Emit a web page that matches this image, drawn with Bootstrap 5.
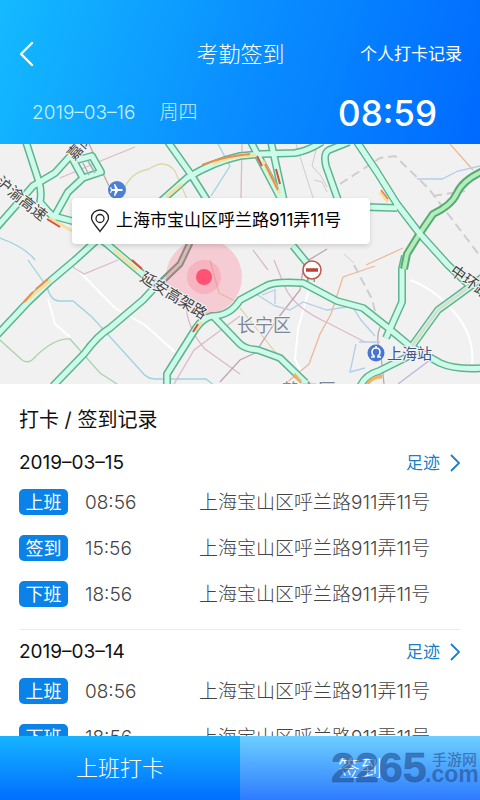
<!DOCTYPE html>
<html lang="zh-CN">
<head>
<meta charset="utf-8">
<meta name="viewport" content="width=device-width, initial-scale=1">
<title>考勤签到</title>
<link href="https://cdn.jsdelivr.net/npm/bootstrap@5.3.0/dist/css/bootstrap.min.css" rel="stylesheet">
<style>
  body { font-family: Inter, "Noto Sans CJK SC", sans-serif; color: #111; background: #fff; }
  .app-header { background: linear-gradient(108deg, #14baff 0%, #0a90ff 48%, #006aff 100%); padding: 32px 18px 8px 19px; }
  .title-row { display: grid; grid-template-columns: 1fr auto 1fr; height: 44px; }
  .page-title { font-size: 22px; line-height: 30px; font-weight: 300; }
  .log-link { font-size: 17px; line-height: 24px; }
  .time-row { height: 46px; margin-top: 14px; padding: 0 25px 0 13px; }
  .today { font-size: 19px; font-weight: 300; color: #c4f0ff; gap: 24px; }
  .clock { font-size: 35px; line-height: 46px; font-weight: 500; }
  .map-canvas { display: block; width: 100%; height: 240px; }
  .place-card { top: 54px; left: 15%; width: 62%; height: 46px; padding: 0 18px; gap: 6px; font-size: 17px; border-radius: 4px; box-shadow: 0 2px 5px rgba(0,0,0,.15); color: #000; }
  .records { padding: 21px 19px 0; min-height: 0; overflow-y: auto; scrollbar-width: none; }
  .records::-webkit-scrollbar { display: none; }
  .records h2 { font-size: 20px; line-height: 30px; font-weight: 400; margin-bottom: 13px; }
  .day + .day { border-top: 1px solid #ececec; padding-top: 7px; }
  .day { padding-bottom: 22px; }
  .day-head { height: 30px; margin-bottom: 11px; }
  .day-head h3 { font-size: 19px; line-height: 30px; font-weight: 400; }
  .track-link { font-size: 17px; line-height: 30px; color: #1a7fc4; gap: 9px; }
  .punches { gap: 20px; }
  .punch { display: grid; grid-template-columns: 66px 114px 1fr; height: 26px; font-size: 19px; line-height: 28px; font-weight: 300; color: #444; }
  .tag { width: 49px; height: 26px; border-radius: 5px; background: #0a82e8; color: #fff; font-size: 18px; font-weight: 400; line-height: 27px; text-align: center; }
  .punch-btn { height: 64px; font-size: 22px; font-weight: 300; border-radius: 0; border: 0; color: #fff; background: linear-gradient(#16b4ff, #006eff); }
  .sign-btn { background: linear-gradient(#6ccfff, #2f7bff); }
  .site-mark { right: 1px; top: 9px; width: 148px; height: 50px; pointer-events: none; }
  .r-edge { stroke: #5fb38f; stroke-width: 8; }
  .r-fill { stroke: #cdfbe9; stroke-width: 5; }
  .map-text { font-family: "Noto Sans CJK SC", sans-serif; font-size: 15px; fill: #444; stroke: #f4f4f4; stroke-width: 2; paint-order: stroke; }
</style>
</head>
<body class="vh-100 d-flex flex-column overflow-hidden">
<header class="app-header text-white flex-shrink-0">
  <div class="title-row align-items-center">
    <a href="#" class="text-white d-flex" aria-label="返回">
      <svg width="16" height="26" viewBox="0 0 16 26" fill="none" stroke="currentColor" stroke-width="2.4" stroke-linecap="round" stroke-linejoin="round"><path d="M13 2 2 13l11 11"/></svg>
    </a>
    <h1 class="page-title m-0">考勤签到</h1>
    <a href="#" class="log-link text-white text-decoration-none text-end text-nowrap">个人打卡记录</a>
  </div>
  <div class="time-row d-flex align-items-center justify-content-between">
    <div class="today d-flex"><span>2019–03–16</span><span>周四</span></div>
    <time class="clock">08:59</time>
  </div>
</header>

<section class="map-area position-relative flex-shrink-0" aria-label="地图">
  <svg class="map-canvas" viewBox="0 0 480 240" preserveAspectRatio="xMidYMid slice">
    <defs>
      <g id="roads" fill="none" stroke-linejoin="round">
        <path d="M26-2 39 38Q42 48 40 58L53 73"/>
        <path d="M-3 83 33 42 55 29 74 8"/>
        <path d="M71 12 83 34 68 48 53 75"/>
        <path d="M83 34 101 28 92 12 77 16"/>
        <path d="M41 62 53 72 76 78 107 100 133 122 157 142"/>
        <path d="M-3 191 28 158 49 138 75 116 97 96"/>
        <path d="M168-2 190 29 207 56"/>
        <path d="M160 58 187 34Q213 18 240 12L262 10 295 9Q308 7 322-2"/>
        <path d="M251-2 282 57"/>
        <path d="M271-2 284 57"/>
        <path d="M349-2 329 6Q323 9 326 22L338 56"/>
        <path d="M366 63 397 64"/>
        <path d="M53 242 84 210Q98 191 110 184L143 156 157 141"/>
        <path d="M167 242V230L196 184Q203 174 212 172 230 172 240 156L266 142Q274 137 303 139L337 157 363 164 387 183 410 202 440 219Q455 226 483 224"/>
        <path d="M213 172 240 200Q245 205 258 206L280 214 310 243"/>
        <path d="M360 243Q365 231 379 227L411 211"/>
        <path d="M293 102 307 119M311 126V138"/>
        <path d="M405 112 402 125 402 158 386 194"/>
        <path d="M412 202 438 166 460 150 483 133"/>
        <path d="M357-2 377 28 397 60 420 90 448 121 468 140"/>
      </g>
    </defs>
    <rect width="480" height="240" fill="#f1f1f2"/>
    <g fill="none" stroke-width="1.3">
      <path stroke="#fff" stroke-width="2" d="M75 123 115 164 145 181 175 208M48 155 55 180 70 193M410 136Q435 145 455 169T472 220M310 142 298 185 295 215 302 230"/>
      <path stroke="#9dd4de" d="M28 116 47 143Q51 157 59 157H73L92 173 141 227Q147 235 155 235H206L215 242M0 94Q25 103 35 116M218 0 230 22 211 52"/>
      <path stroke="#a8d5aa" d="M0 196 22 216Q29 221 36 212 55 194 70 195L100 229 117 240"/>
      <path stroke="#dcd7a8" d="M125 43Q132 28 149 25 165 14 175 27L187 55M210 116 219 149 235 157M240 164 280 214"/>
      <path stroke="#ddb9c8" d="M60 34 98 18 135 3M73 123 84 130 118 116M242 0 241 54M253 106 268 126M274 116 285 143Q294 164 328 179L365 198M186 160Q187 185 205 205L240 230M174 240 194 206 240 172"/>
      <path stroke="#c0a4b1" d="M327 105 304 119 300 146 278 174 255 209 240 216 220 238M380 183Q375 195 381 212L384 240"/>
      <path stroke="#edb99a" d="M450 0 473 26M366 121 403 104M375 122 343 133 331 170 320 190 309 220 285 240"/>
      <path stroke="#b3cee8" d="M417 35H442L458 27 480 22M256 150 275 162 290 166 303 158 327 166 352 162 361 176 375 192M359 198H380M356 200 350 228 365 224M262 151 275 146V160"/>
      <path stroke="#bcb6d8" d="M398 240 430 216"/>
      <path stroke="#ccc" stroke-width="1" d="M296 0 315 60M316 6 312 22 321 32 327 43M327 48 322 38 314 36M344 110 354 119"/>
      <path stroke="#d0ccd0" stroke-width="2" stroke-dasharray="9 5" d="M340 40 380 14 395 12 429 45 480 112M354 121 372 155 377 175M433 52 465 47"/>
      <path stroke="#bfaaa0" d="M89 0 109 42"/>
    </g>
    <use href="#roads" class="r-edge"/>
    <use href="#roads" class="r-fill"/>
    <g fill="none" stroke-linejoin="round">
      <path d="M83 19 89 31M88 17 95 29" stroke="#9fb8b8" stroke-width="1.5"/>
      <path d="M483 27Q463 36 457 49 452 61 433 70L420 89 407 110 404 125" stroke="#55aa75" stroke-width="8"/>
      <path d="M483 27Q463 36 457 49 452 61 433 70L420 89 407 110 404 125" stroke="#b5edbb" stroke-width="4"/>
      <path d="M155 144 180 120 190 99" stroke="#6f9480" stroke-width="7"/>
      <path d="M155 144 180 120 190 99" stroke="#c6ddcd" stroke-width="3"/>
      <path d="M357-2 377 28 397 60 420 90 448 121 468 140" stroke="#cdfbe9" stroke-width="5"/>
      <path d="M412 202 438 166 480 135" stroke="#d9dfce" stroke-width="3"/>
      <g stroke-width="3">
        <path stroke="#f6dfa0" d="M166 53 182 40M213 20Q228 12 256 11M49 74 74 88M114 106 137 126M24 158 51 136M263 17 280 50M195 186 202 178M380 48 388 58"/>
        <path stroke="#e78f50" stroke-width="2" d="M202 21Q225 12 250 10M24 158 33 148M36 145 48 135M265 20 278 46M381 46 388 55M370 238Q372 233 382 232"/>
        <path stroke="#d8503e" stroke-width="2" d="M47 75 60 83M132 116 142 125M257 12 262 22M276 25 280 40M193 188 198 180"/>
        <path stroke="#f5b060" d="M368 240Q371 233 382 233M294 230 301 238"/>
      </g>
    </g>
    <circle cx="204" cy="133" r="38" fill="#ff6780" fill-opacity=".27"/>
    <circle cx="204" cy="133" r="17" fill="#ff5c7c" fill-opacity=".22"/>
    <circle cx="204" cy="133" r="8" fill="#ff5274"/>
    <circle cx="117" cy="46" r="9" fill="#4d7fd4"/>
    <path fill="#fff" d="m123 46-1-1h-4l-3-5h-1l1 5h-3l-1-2h-1l1 3-1 3h1l1-2h3l-1 5h1l3-5h4z"/>
    <circle cx="312" cy="126" r="9" fill="#fff" stroke="#bf594c" stroke-width="1.5"/>
    <path stroke="#bf3f35" stroke-width="3.5" d="M306 126h12"/>
    <circle cx="376" cy="209" r="8.5" fill="#4775d2"/>
    <path fill="none" stroke="#fff" stroke-width="1.6" d="M371 213h3v-1q-2-1-2-4a4 4 0 0 1 8 0q0 3-2 4v1h3M376 202v2"/>
    <g class="map-text">
      <text transform="translate(-5 40) rotate(39)">沪渝高速</text>
      <text transform="translate(74 17) rotate(-48)">嘉闵</text>
      <text transform="translate(139 136) rotate(32)">延安高架路</text>
      <text transform="translate(449 129) rotate(36)">中环路</text>
      <text x="387" y="215" style="fill:#3e5688">上海站</text>
    </g>
    <g class="map-text" style="fill:#7d8799;font-size:18px">
      <text x="237" y="188">长宁区</text>
      <text x="282" y="253">静安区</text>
    </g>
  </svg>
  <div class="place-card position-absolute bg-white d-flex align-items-center text-nowrap">
    <svg class="flex-shrink-0" width="20" height="24" viewBox="0 0 20 24" fill="none" stroke="#222" stroke-width="1.3"><path d="M10 22.500C7 18 1.500 13 1.500 9a8.500 8 0 0 1 17 0c0 4-5.500 9-8.500 13.500z"/><circle cx="10" cy="9.500" r="4"/></svg>
    <span>上海市宝山区呼兰路911弄11号</span>
  </div>
</section>

<main class="records flex-fill">
  <h2>打卡 / 签到记录</h2>
  <section class="day">
    <div class="day-head d-flex justify-content-between align-items-center">
      <h3 class="m-0">2019–03–15</h3>
      <a href="#" class="track-link d-flex align-items-center text-decoration-none">足迹
        <svg width="12" height="20" viewBox="0 0 12 20" fill="none" stroke="currentColor" stroke-width="1.8"><path d="m2 2 8 8-8 8"/></svg></a>
    </div>
    <ul class="punches list-unstyled m-0 d-flex flex-column">
      <li class="punch"><span class="tag">上班</span><time>08:56</time><span>上海宝山区呼兰路911弄11号</span></li>
      <li class="punch"><span class="tag">签到</span><time>15:56</time><span>上海宝山区呼兰路911弄11号</span></li>
      <li class="punch"><span class="tag">下班</span><time>18:56</time><span>上海宝山区呼兰路911弄11号</span></li>
    </ul>
  </section>
  <section class="day">
    <div class="day-head d-flex justify-content-between align-items-center">
      <h3 class="m-0">2019–03–14</h3>
      <a href="#" class="track-link d-flex align-items-center text-decoration-none">足迹
        <svg width="12" height="20" viewBox="0 0 12 20" fill="none" stroke="currentColor" stroke-width="1.8"><path d="m2 2 8 8-8 8"/></svg></a>
    </div>
    <ul class="punches list-unstyled m-0 d-flex flex-column">
      <li class="punch"><span class="tag">上班</span><time>08:56</time><span>上海宝山区呼兰路911弄11号</span></li>
      <li class="punch"><span class="tag">下班</span><time>18:56</time><span>上海宝山区呼兰路911弄11号</span></li>
    </ul>
  </section>
</main>

<footer class="position-relative d-flex flex-shrink-0">
  <button type="button" class="btn punch-btn w-50">上班打卡</button>
  <button type="button" class="btn punch-btn sign-btn w-50">签到</button>
  <svg class="site-mark position-absolute" viewBox="0 0 148 50" fill="#1d4580" fill-opacity=".55" font-family="Liberation Sans, Noto Sans CJK SC, sans-serif" font-weight="700">
    <text x="0" y="37" font-size="43" stroke="#1d4580" stroke-opacity=".3">2265</text>
    <text x="101" y="20" font-size="15" font-weight="500">手游网</text>
    <text x="94" y="37" font-size="23">.com</text>
  </svg>
</footer>
<script src="https://cdn.jsdelivr.net/npm/bootstrap@5.3.0/dist/js/bootstrap.bundle.min.js"></script>
</body>
</html>
